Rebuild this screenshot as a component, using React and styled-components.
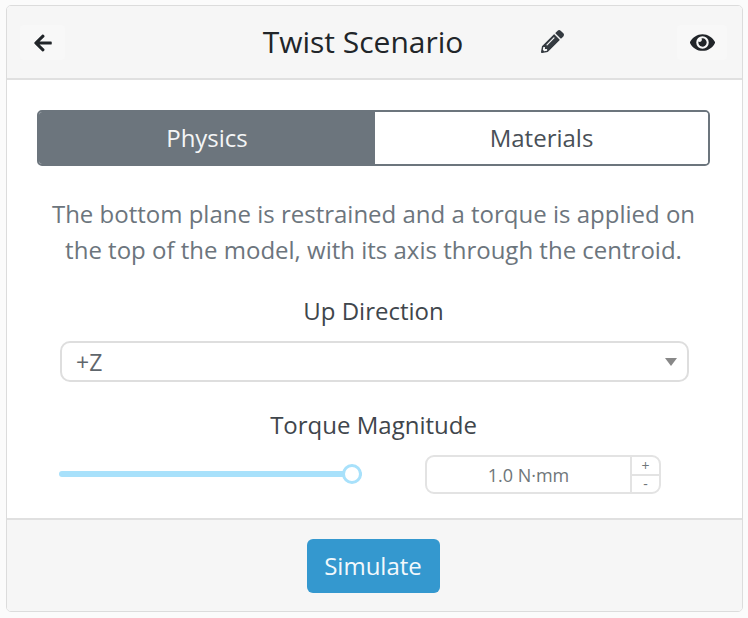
import { createGlobalStyle, styled } from "styled-components";
import { FaArrowLeft, FaEye, FaPencilAlt } from "react-icons/fa";

const GlobalStyle = createGlobalStyle`
  html, body {
    margin: 0;
    background: #fbfbfb;
    font-family: "Open Sans", "Liberation Sans", sans-serif;
  }
  * { box-sizing: border-box; }
`;

function App() {
  return (
    <Page>
      <GlobalStyle />
      <Card>
        <Header>
          <IconButton>
            <FaArrowLeft size={20} />
          </IconButton>
          <TitleRow>
            <Title>Twist Scenario</Title>
            <Edit>
              <FaPencilAlt size={23} />
            </Edit>
          </TitleRow>
          <IconButton $wide>
            <FaEye size={25} />
          </IconButton>
        </Header>
        <Body>
          <Tabs>
            <Tab $active>Physics</Tab>
            <Tab>Materials</Tab>
          </Tabs>
          <Description>
            The bottom plane is restrained and a torque is applied on
            <br />
            the top of the model, with its axis through the centroid.
          </Description>
          <Label>Up Direction</Label>
          <Select>
            <span>+Z</span>
            <Caret />
          </Select>
          <Label>Torque Magnitude</Label>
          <Controls>
            <Slider>
              <Track />
              <Thumb />
            </Slider>
            <Stepper>
              <StepperValue>1.0 N·mm</StepperValue>
              <StepperButtons>
                <StepperButton>+</StepperButton>
                <StepperButton>-</StepperButton>
              </StepperButtons>
            </Stepper>
          </Controls>
        </Body>
        <Footer>
          <SimulateButton>Simulate</SimulateButton>
        </Footer>
      </Card>
    </Page>
  );
}

const Page = styled.div`
  width: 748px;
  height: 618px;
  padding: 5px 5px 6px 6px;
`;

const Card = styled.div`
  height: 100%;
  display: flex;
  flex-direction: column;
  background: #fff;
  border: 1px solid #dcdcdc;
  border-radius: 5px;
  overflow: hidden;
`;

const Header = styled.div`
  height: 74px;
  flex: none;
  display: flex;
  align-items: center;
  justify-content: space-between;
  padding: 0 15px 0 13px;
  background: #f6f6f6;
  border-bottom: 2px solid #e0e0e0;
`;

const IconButton = styled.div`
  width: ${(p) => (p.$wide ? "50px" : "45px")};
  height: 35px;
  padding-top: 1px;
  display: flex;
  align-items: center;
  justify-content: center;
  background: #f8f8f8;
  border-radius: 4px;
  color: #212529;
`;

const TitleRow = styled.div`
  position: relative;
  flex: 1;
  display: flex;
  justify-content: center;
  padding-right: 16px;
`;

const Title = styled.div`
  font-size: 30px;
  line-height: 38px;
  color: #212529;
`;

const Edit = styled.div`
  position: absolute;
  left: 476px;
  top: 7px;
  color: #343a40;
  display: flex;
`;

const Body = styled.div`
  flex: 1;
  display: flex;
  flex-direction: column;
  padding: 30px 32px 0 30px;
`;

const Tabs = styled.div`
  height: 56px;
  flex: none;
  display: grid;
  grid-template-columns: 336px 1fr;
  border: 2px solid #6c757d;
  border-radius: 5px;
  overflow: hidden;
`;

const Tab = styled.div`
  display: flex;
  align-items: center;
  justify-content: center;
  padding-bottom: 2px;
  font-size: 24px;
  background: ${(p) => (p.$active ? "#6c757d" : "#fff")};
  color: ${(p) => (p.$active ? "#f4f5f6" : "#495057")};
`;

const Description = styled.p`
  margin: 30px 0 0;
  font-size: 24px;
  line-height: 36px;
  text-align: center;
  color: #6c757d;
`;

const Label = styled.div`
  margin-top: 27px;
  font-size: 24px;
  line-height: 32px;
  text-align: center;
  color: #3f464c;
`;

const Select = styled.div`
  height: 41px;
  margin: 14px 21px 0 23px;
  flex: none;
  display: flex;
  align-items: center;
  justify-content: space-between;
  padding: 0 10px 0 14px;
  border: 2px solid #dedede;
  border-radius: 10px;
  font-size: 23px;
  color: #5f666c;
`;

const Caret = styled.div`
  width: 0;
  height: 0;
  border-left: 6px solid transparent;
  border-right: 6px solid transparent;
  border-top: 8px solid #888;
`;

const Controls = styled.div`
  margin: 14px 0 0 22px;
  display: flex;
  align-items: flex-start;
  justify-content: space-between;
  padding-right: 49px;
`;

const Slider = styled.div`
  position: relative;
  width: 303px;
  height: 22px;
  margin-top: 8px;
  display: flex;
  align-items: center;
`;

const Track = styled.div`
  width: 100%;
  height: 6px;
  background: #a8e1fb;
  border-radius: 3px;
`;

const Thumb = styled.div`
  position: absolute;
  right: 0;
  top: 1px;
  width: 20px;
  height: 20px;
  background: #fff;
  border: 3px solid #a8e1fb;
  border-radius: 50%;
`;

const Stepper = styled.div`
  width: 236px;
  height: 39px;
  display: flex;
  border: 2px solid #e3e3e3;
  border-radius: 9px;
  overflow: hidden;
`;

const StepperValue = styled.div`
  flex: 1;
  display: flex;
  align-items: center;
  justify-content: center;
  font-size: 18px;
  color: #6f7679;
`;

const StepperButtons = styled.div`
  width: 29px;
  display: flex;
  flex-direction: column;
  border-left: 2px solid #e3e3e3;
`;

const StepperButton = styled.div`
  flex: 1;
  display: flex;
  align-items: center;
  justify-content: center;
  height: 17px;
  overflow: hidden;
  font-size: 14px;
  line-height: 17px;
  color: #6f7679;

  &:first-child {
    border-bottom: 2px solid #e3e3e3;
  }
`;

const Footer = styled.div`
  height: 93px;
  flex: none;
  display: flex;
  align-items: center;
  justify-content: center;
  padding: 0 3px 0 0;
  background: #f6f6f6;
  border-top: 2px solid #e0e0e0;
`;

const SimulateButton = styled.button`
  width: 133px;
  height: 54px;
  padding: 0;
  background: #3498cf;
  border: none;
  border-radius: 6px;
  font-family: inherit;
  font-size: 24px;
  color: #f2f8fc;
`;

export default App;
